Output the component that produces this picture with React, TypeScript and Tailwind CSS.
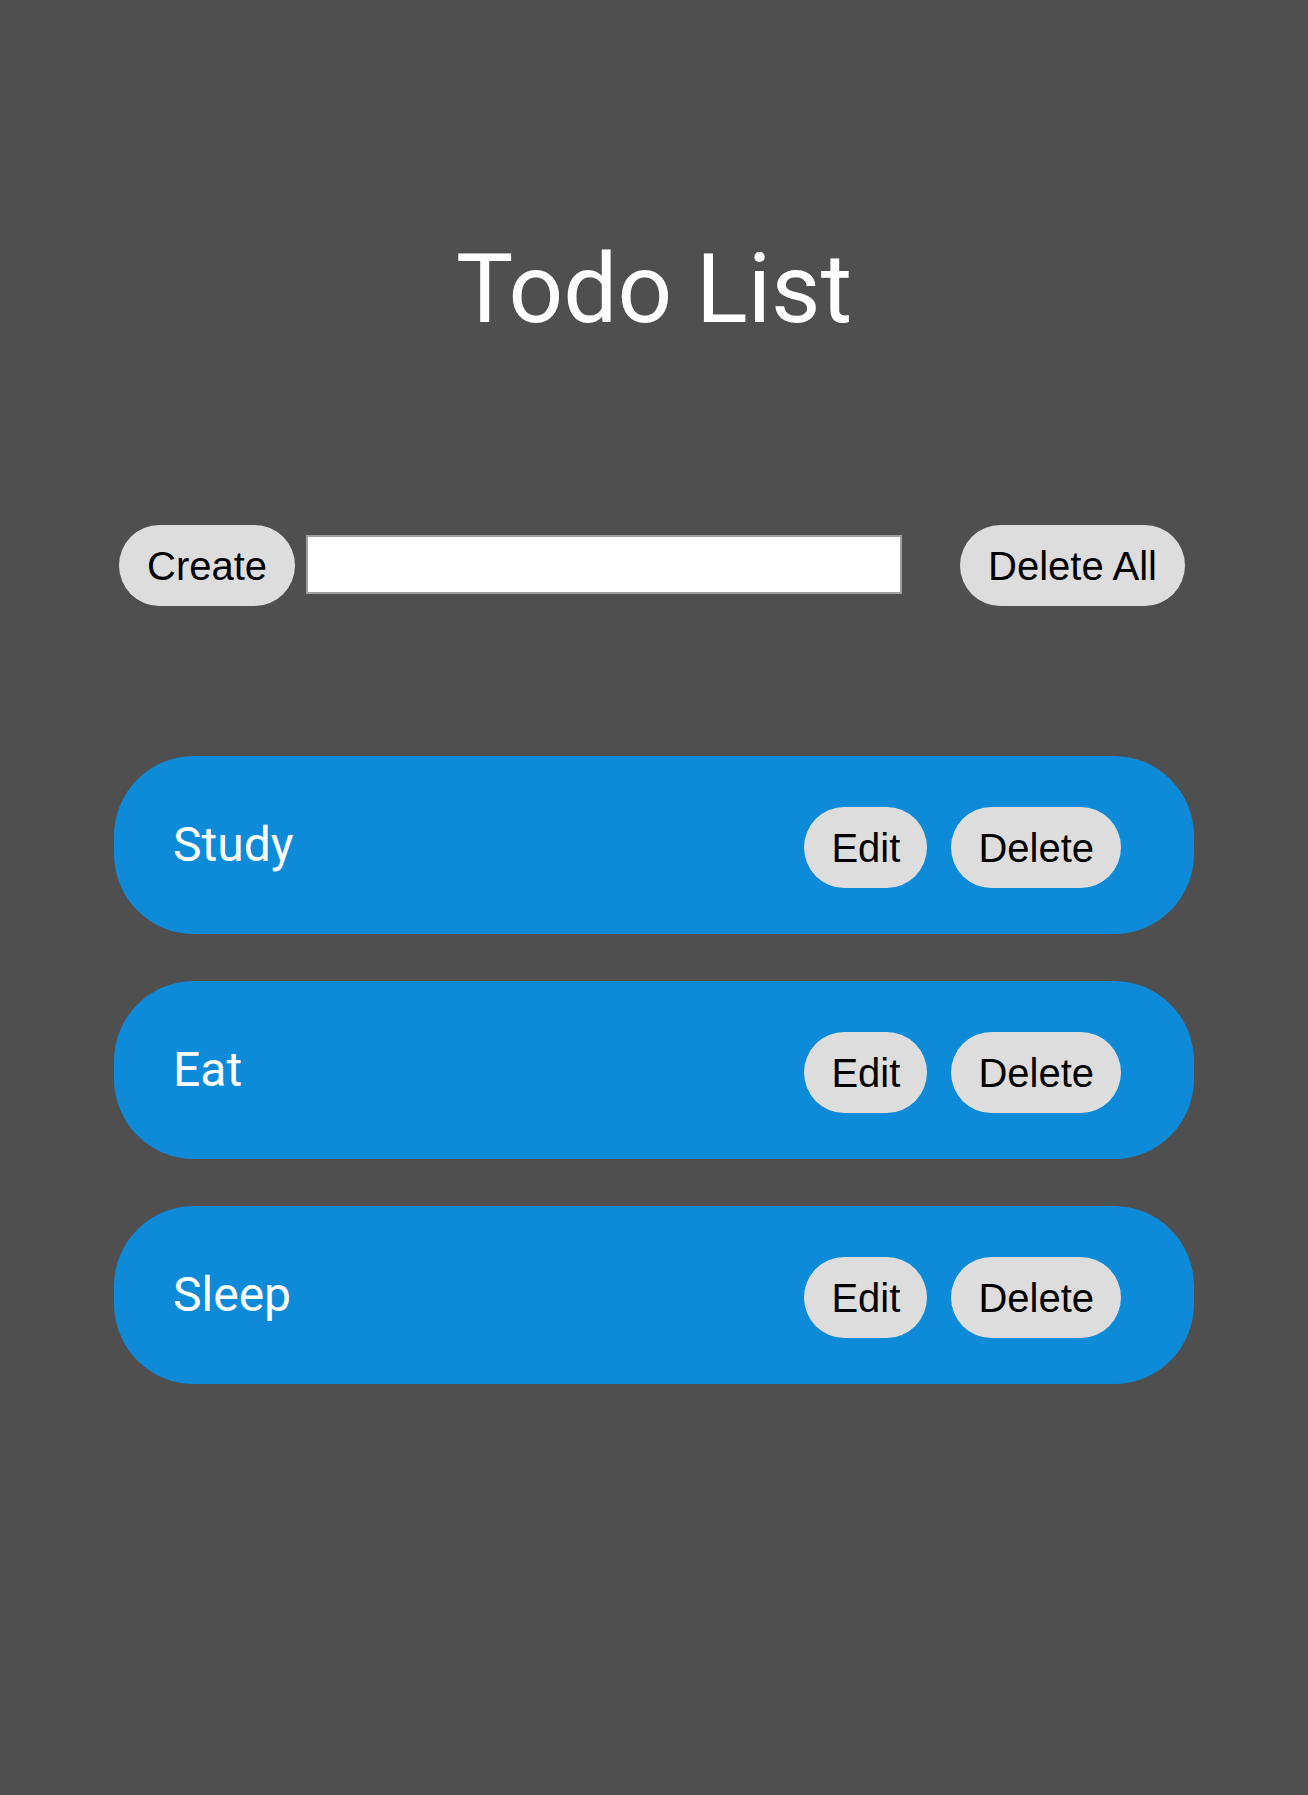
import { useState } from "react";

const btn =
  "h-[81px] rounded-full bg-[#dddddd] text-black text-[40px] font-['Liberation_Sans',Arial,sans-serif] leading-none";

export default function App() {
  const [todos, setTodos] = useState(["Study", "Eat", "Sleep"]);
  const [text, setText] = useState("");

  function create() {
    if (!text.trim()) return;
    setTodos([...todos, text.trim()]);
    setText("");
  }

  return (
    <div className="min-h-[1795px] w-full bg-[#4f4f4f] flex flex-col items-center">
      <h1 className="mt-[241px] text-[96px] leading-none text-white font-['Roboto',sans-serif] font-normal">
        Todo List
      </h1>

      <div className="mt-[188px] w-[1066px] mr-[4px] flex items-center">
        <button className={btn + " px-[28px]"} onClick={create}>
          Create
        </button>
        <input
          className="ml-[11px] w-[596px] h-[59px] -mt-[3px] bg-white border-2 border-[#a0a0a0] px-2 text-[28px] outline-none"
          value={text}
          onChange={(e) => setText(e.target.value)}
        />
        <button className={btn + " px-[28px] ml-auto"} onClick={() => setTodos([])}>
          Delete All
        </button>
      </div>

      <div className="mt-[150px] w-[1080px] flex flex-col gap-[47px]">
        {todos.map((todo, i) => (
          <div
            key={i}
            className="h-[178px] rounded-[80px] bg-[#0e8bd8] flex items-center pl-[59px] pr-[73px]"
          >
            <span className="flex-1 text-white text-[48px] font-['Roboto',sans-serif]">
              {todo}
            </span>
            <div className="flex gap-[24px] mt-[5px]">
              <button className={btn + " px-[27px]"}>Edit</button>
              <button
                className={btn + " px-[27px]"}
                onClick={() => setTodos(todos.filter((_, j) => j !== i))}
              >
                Delete
              </button>
            </div>
          </div>
        ))}
      </div>
    </div>
  );
}
